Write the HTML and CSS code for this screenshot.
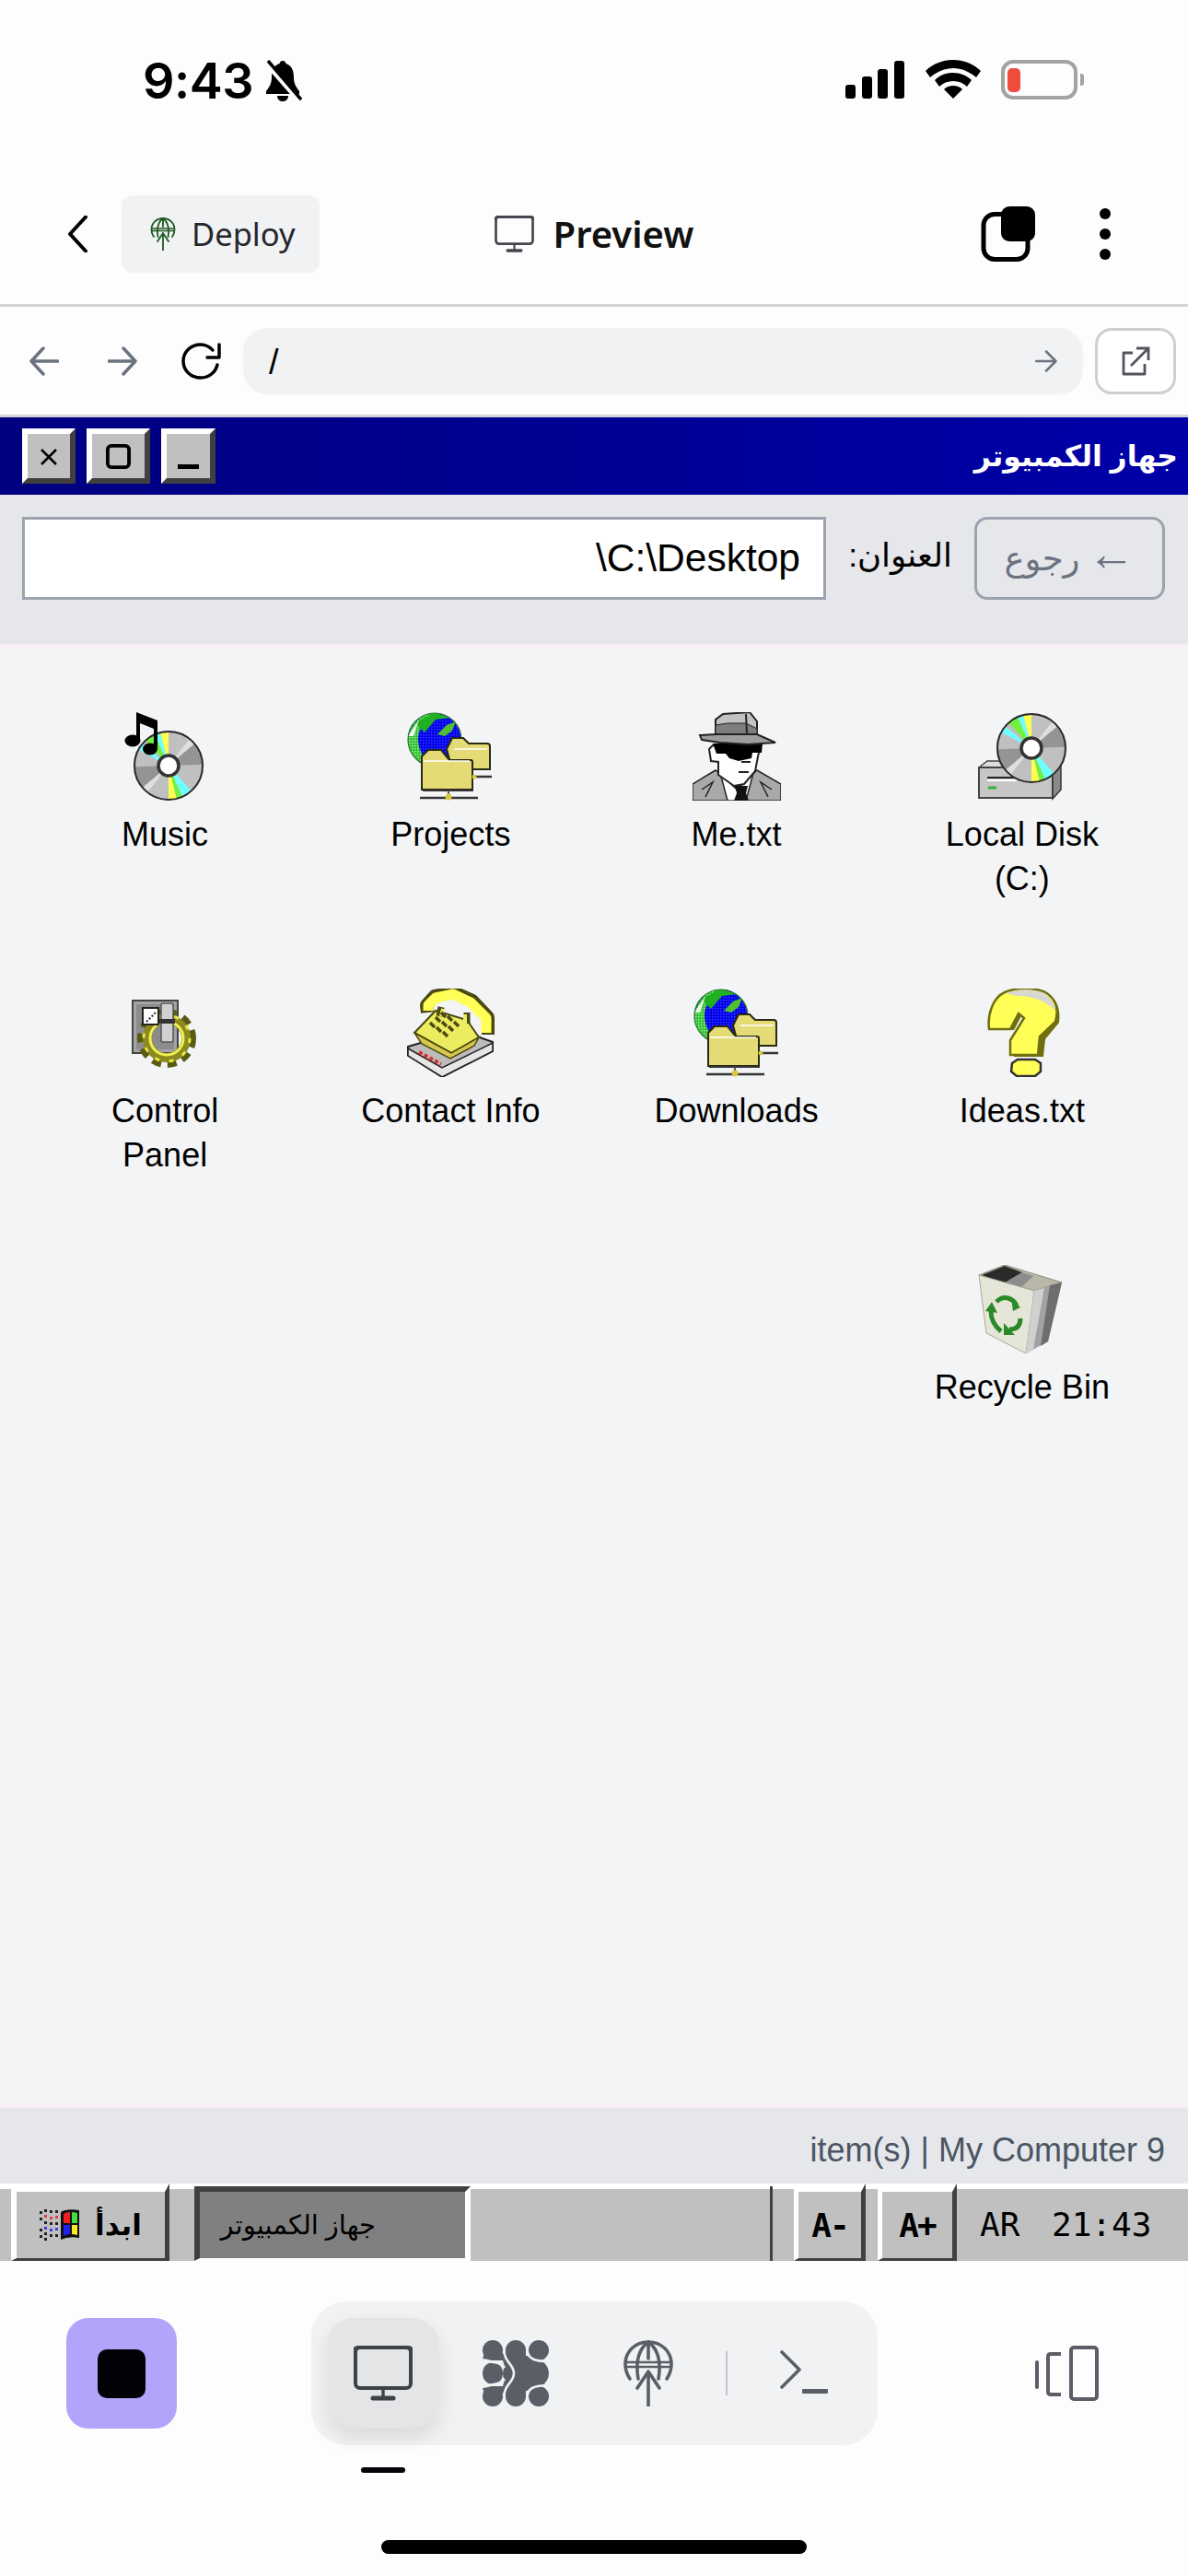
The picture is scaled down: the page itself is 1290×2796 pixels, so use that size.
FILE: index.html
```html
<!DOCTYPE html>
<html lang="en">
<head>
<meta charset="utf-8">
<title>Preview</title>
<link rel="stylesheet" href="styles.css">
</head>
<body>
<svg class="defs" xmlns="http://www.w3.org/2000/svg">
  <defs>
    <pattern id="dFolder" width="2" height="2" patternUnits="userSpaceOnUse"><rect width="2" height="2" fill="#f0e68c"/><rect width="1" height="1" fill="#d8d060"/><rect x="1" y="1" width="1" height="1" fill="#d8d060"/></pattern>
    <pattern id="dGrey" width="3" height="3" patternUnits="userSpaceOnUse"><rect width="3" height="3" fill="#a8a8a8"/><rect width="1.5" height="1.5" fill="#808080"/><rect x="1.5" y="1.5" width="1.5" height="1.5" fill="#808080"/></pattern>
    <pattern id="dLight" width="3" height="3" patternUnits="userSpaceOnUse"><rect width="3" height="3" fill="#f4f4f4"/><rect width="1.5" height="1.5" fill="#c8c8c8"/><rect x="1.5" y="1.5" width="1.5" height="1.5" fill="#c8c8c8"/></pattern>
    <pattern id="dOcean" width="3" height="3" patternUnits="userSpaceOnUse"><rect width="3" height="3" fill="#0000e8"/><rect width="1.5" height="1.5" fill="#3a3aff"/></pattern>
    <pattern id="dLand" width="3" height="3" patternUnits="userSpaceOnUse"><rect width="3" height="3" fill="#30c030"/><rect width="1.5" height="1.5" fill="#a0f0a0"/></pattern>
    <clipPath id="cdClip"><circle cx="39" cy="39" r="37"/></clipPath>
    <clipPath id="globeClip"><circle cx="31" cy="30" r="29"/></clipPath>
    <symbol id="cd" viewBox="0 0 78 78">
      <circle cx="39" cy="39" r="38" fill="#c0c0c0"/>
      <g clip-path="url(#cdClip)">
        <polygon points="39,39 24.5,-19.2 39,-21" fill="#ffff50"/>
        <polygon points="39,39 14.6,-15.8 24.5,-19.2" fill="#70ffff"/>
        <polygon points="39,39 -1.1,-5.6 14.6,-15.8" fill="#70f040"/>
        <polygon points="39,39 -14,10.9 -7,.4" fill="#70ffff"/>
        <polygon points="39,39 39,99 53.5,97.2" fill="#ffff50"/>
        <polygon points="39,39 53.5,97.2 63.4,93.8" fill="#70f040"/>
        <polygon points="39,39 63.4,93.8 79.1,83.6" fill="#70ffff"/>
        <polygon points="39,39 76,-8.3 85,.4" fill="url(#dLight)"/>
        <polygon points="39,39 2,86.3 -7,77.6" fill="url(#dLight)"/>
        <polygon points="39,39 85,.4 99,37" fill="url(#dGrey)"/>
        <polygon points="39,39 -7,77.6 -21,41" fill="url(#dGrey)"/>
      </g>
      <circle cx="39" cy="39" r="37" fill="none" stroke="#2a2a2a" stroke-width="2"/>
      <circle cx="39" cy="39" r="11" fill="#fff" stroke="#333" stroke-width="3.5"/>
    </symbol>
    <symbol id="globefolders" viewBox="0 0 96 96">
      <circle cx="31" cy="30" r="29" fill="url(#dOcean)"/>
      <g clip-path="url(#globeClip)">
        <path d="M2 30C4 12 18 0 34 0 26 4 18 10 14 22 10 34 18 50 26 58 14 58 0 46 2 30Z" fill="url(#dLand)"/>
        <path d="M10 12 30 0 48 6 32 8 20 22Z" fill="#20b020"/>
        <path d="M34 24 44 14 54 10 50 20 42 26Z" fill="#50c030"/>
        <path d="M2 26 14 8 8 26Z" fill="#f0f8f0"/>
      </g>
      <circle cx="31" cy="30" r="29" fill="none" stroke="#2c7a2c" stroke-width="1.2"/>
      <path d="M72 70H93" stroke="#333" stroke-width="2.5"/>
      <path d="M44 40 50 28H62L68 34H88Q91 34 91 37V62H50Z" fill="url(#dFolder)" stroke="#2a2a10" stroke-width="2"/>
      <path d="M52 40H88" stroke="#fff" stroke-width="1.5"/>
      <path d="M17 84V48L24 41H38L47 52H70Q72 52 72 54V84Z" fill="url(#dFolder)" stroke="#2a2a10" stroke-width="2"/>
      <path d="M19 53H69" stroke="#fff" stroke-width="1.5"/>
      <path d="M18 85H73" stroke="#333" stroke-width="2"/>
      <path d="M15 93H78" stroke="#333" stroke-width="2.5"/>
      <path d="M46 85V90" stroke="#555" stroke-width="2"/>
      <circle cx="46" cy="92" r="3.5" fill="#d8c840"/>
      <circle cx="74" cy="70" r="2.5" fill="#d8c840"/>
    </symbol>
    <symbol id="deployglyph" viewBox="0 0 54 72">
      <g fill="none" stroke="currentColor" stroke-width="3.6" stroke-linecap="round" stroke-linejoin="round">
        <path d="M7 42C3 36 2 30 2 26 2 12 13 2 27 2S52 12 52 26C52 30 51 36 47 42"/>
        <path d="M27 2C16 10 13 24 16 42M27 2C38 10 41 24 38 42M27 2V20"/>
        <path d="M2 24H52M2 29H52" stroke-width="2.6"/>
        <path d="M27 71V34M15 52 27 34 39 52"/>
      </g>
    </symbol>
    <symbol id="monitorglyph" viewBox="0 0 64 60">
      <g fill="none" stroke="currentColor" stroke-linecap="round">
        <rect x="2" y="2" width="60" height="44" rx="5" stroke-width="4"/>
        <path d="M1 6Q1 2 5 2H59Q63 2 63 6" stroke-width="4"/>
        <path d="M32 47V56" stroke-width="3.4"/>
        <path d="M21 57H43" stroke-width="5"/>
      </g>
    </symbol>
  </defs>
</svg>

<div class="phone">
  <header class="status">
    <div class="status-left">
      <span class="clock">9:43</span>
      <svg class="bell" viewBox="0 0 42 46"><path d="M21 1c2 0 3 1 3.500 3C31 6 33 12 33 19c0 7 3 11 6 15v3H3v-3c3-4 6-8 6-15C9 12 11 6 17.500 4 18 2 19 1 21 1Z" fill="#000"/><path d="M15 39h12c0 4-3 6-6 6s-6-2-6-6Z" fill="#000"/><path d="M3 3 39 44" stroke="#fdfdfd" stroke-width="6"/><path d="M5 1 41 43" stroke="#000" stroke-width="3.500"/></svg>
    </div>
    <div class="status-right">
      <svg class="signal" viewBox="0 0 64 41"><rect x="0" y="26" width="11" height="15" rx="3"/><rect x="18" y="17" width="11" height="24" rx="3"/><rect x="35" y="9" width="11" height="32" rx="3"/><rect x="53" y="0" width="11" height="41" rx="3"/></svg>
      <svg class="wifi" viewBox="0 0 60 42"><path d="M30 0C19 0 8 4 0 12l5 7c7-6 16-10 25-10s18 4 25 10l5-7C52 4 41 0 30 0Z"/><path d="M30 14c-8 0-15 3-20 8l5 7c4-4 9-6 15-6s11 2 15 6l5-7c-5-5-12-8-20-8Z"/><path d="M30 28c-4 0-7 1-10 4l10 10 10-10c-3-3-6-4-10-4Z"/></svg>
      <div class="battery"><span class="battery-level"></span></div>
      <span class="battery-nub"></span>
    </div>
  </header>

  <nav class="appbar">
    <div class="appbar-left">
      <svg class="chevron" viewBox="0 0 22 40"><path d="M20 1.500 3 20l17 18.500" fill="none" stroke="#000" stroke-width="4" stroke-linecap="round" stroke-linejoin="round"/></svg>
      <div class="chip">
        <svg class="chip-icon"><use href="#deployglyph"/></svg>
        <span>Deploy</span>
      </div>
    </div>
    <div class="appbar-title">
      <svg class="title-icon"><use href="#monitorglyph"/></svg>
      <span>Preview</span>
    </div>
    <div class="appbar-right">
      <svg class="tabs-icon" viewBox="0 0 60 60"><rect x="3" y="8.500" width="48" height="49" rx="12" fill="none" stroke="#000" stroke-width="5"/><rect x="22" y="0" width="37" height="38" rx="9" fill="#000"/></svg>
      <svg class="dots" viewBox="0 0 14 58"><circle cx="7" cy="7" r="6"/><circle cx="7" cy="29" r="6"/><circle cx="7" cy="51" r="6"/></svg>
    </div>
  </nav>

  <div class="browserbar">
    <svg class="nav-arrow" viewBox="0 0 32 32"><path d="M31 16H3M15 2 2 16l13 14" fill="none" stroke="#6b7280" stroke-width="3.500" stroke-linecap="round" stroke-linejoin="round"/></svg>
    <svg class="nav-arrow nav-forward" viewBox="0 0 32 32"><path d="M1 16h28M17 2l13 14-13 14" fill="none" stroke="#6b7280" stroke-width="3.500" stroke-linecap="round" stroke-linejoin="round"/></svg>
    <svg class="reload" viewBox="0 0 44 40"><path d="M34 8C30 4 26 2 21 2 10 2 2 10 2 20s8 18 19 18c9 0 16-6 18-14" fill="none" stroke="#000" stroke-width="3.500" stroke-linecap="round"/><path d="M41 2v14H28" fill="none" stroke="#000" stroke-width="3.500" stroke-linecap="round" stroke-linejoin="round"/></svg>
    <div class="urlbar">
      <span class="url-text">/</span>
      <svg class="url-go" viewBox="0 0 24 24"><path d="M1 12h20M12 1.500 22.500 12 12 22.500" fill="none" stroke="#6b7280" stroke-width="2.500" stroke-linecap="round" stroke-linejoin="round"/></svg>
    </div>
    <button class="ext-btn" type="button"><svg viewBox="0 0 32 32"><path d="M13 7H3v23h23V19" fill="none" stroke="#52555c" stroke-width="2.800" stroke-linejoin="round"/><path d="M11 21 30 2M17 2h13v13" fill="none" stroke="#52555c" stroke-width="2.800"/></svg></button>
  </div>

  <main class="window" dir="rtl">
    <div class="titlebar">
      <span class="title-text">جهاز الكمبيوتر</span>
      <div class="win-buttons">
        <button class="bevel win-btn win-min" type="button"><svg viewBox="0 0 23 5"><rect width="23" height="5" fill="#000"/></svg></button>
        <button class="bevel win-btn win-max" type="button"><svg viewBox="0 0 28 28"><rect x="2" y="2" width="24" height="24" rx="4" fill="none" stroke="#000" stroke-width="4"/></svg></button>
        <button class="bevel win-btn win-close" type="button"><svg viewBox="0 0 18 18"><path d="M1 1l16 16M17 1 1 17" stroke="#000" stroke-width="2.500"/></svg></button>
      </div>
    </div>

    <div class="toolbar">
      <button class="back-btn" type="button"><span class="back-arrow">←</span> رجوع</button>
      <span class="addr-label">العنوان:</span>
      <div class="addr-input">C:\Desktop\</div>
    </div>

    <section class="desktop">
      <div class="item">
        <svg class="ico" viewBox="0 0 96 96">
          <path d="M1 60 10 53H40V60Z" fill="#dcdcdc" stroke="#444" stroke-width="1.500"/>
          <path d="M1 60H81V93H1Z" fill="#c6c6c6" stroke="#444" stroke-width="2"/>
          <path d="M81 62 90 50V84L81 94Z" fill="#8a8a8a" stroke="#333" stroke-width="1.500"/>
          <path d="M10 71H42" stroke="#222" stroke-width="2"/>
          <path d="M10 74H42" stroke="#fff" stroke-width="2"/>
          <path d="M11 82H20" stroke="#30b030" stroke-width="3"/>
          <use href="#cd" x="19" y="0" width="78" height="78"/>
        </svg>
        <span class="ico-label">Local Disk (C:)</span>
      </div>
      <div class="item">
        <svg class="ico" viewBox="0 0 96 96">
          <path d="M0 96V78L25 63 34 70 48 82 62 70 70 63 96 78V96Z" fill="#a9a9a9" stroke="#222" stroke-width="1.500"/>
          <path d="M10 84 22 76 14 92M86 84 74 76 82 92" fill="none" stroke="#222" stroke-width="1.500"/>
          <path d="M30 66 48 84 66 66 58 96H38Z" fill="#fff" stroke="#222" stroke-width="1.500"/>
          <path d="M18 40 20 53 28 54 28 68 45 80 56 78 68 64 71 48 74 36H22Z" fill="#fff" stroke="#222" stroke-width="2"/>
          <path d="M46 80H60L58 88 61 96H45L48 88Z" fill="#111"/>
          <path d="M22 34H76L75 44H65L64 50 50 53 40 50 36 45H26Z" fill="#000"/>
          <path d="M53 54H63M50 65H61" stroke="#222" stroke-width="2"/>
          <path d="M25 24V8L33 2 62 0 70 10V26Z" fill="#c2c2c2" stroke="#222" stroke-width="2"/>
          <path d="M25 14 38 12H58L70 18V26H25Z" fill="#7e7e7e" stroke="#222" stroke-width="1"/>
          <path d="M58 2 59 25" stroke="#222" stroke-width="2"/>
          <path d="M8 25 26 24H70L90 33 60 35 30 33 10 30Z" fill="#9e9e9e" stroke="#222" stroke-width="2"/>
        </svg>
        <span class="ico-label">Me.txt</span>
      </div>
      <div class="item">
        <svg class="ico" viewBox="0 0 96 96"><use href="#globefolders"/></svg>
        <span class="ico-label">Projects</span>
      </div>
      <div class="item">
        <svg class="ico" viewBox="0 0 96 96">
          <use href="#cd" x="13" y="19" width="78" height="78"/>
          <path d="M17 0 40 9V40H36V18L21 12V30H17Z" fill="#000"/>
          <ellipse cx="13" cy="31" rx="8.500" ry="6.500" fill="#000"/>
          <ellipse cx="32" cy="40" rx="8" ry="6.500" fill="#000"/>
        </svg>
        <span class="ico-label">Music</span>
      </div>

      <div class="item">
        <svg class="ico" viewBox="0 0 96 96">
          <path d="M14 44C12 30 18 10 29 4 36 1 44 0 50 0 60 0 70 1 76 6 84 12 88 22 86 36L71 54 69 73H37L37 56 52 32 46 27 37 44Z" fill="#6f6f10" transform="translate(2 1)"/>
          <path d="M12 44C10 28 16 10 29 4 36 1 44 0 50 0 60 0 70 1 76 6 84 12 88 22 84 36L67 52 65 72H35L35 56 50 32 44 27 35 44Z" fill="#ffff58" stroke="#6f6f10" stroke-width="2.500"/>
          <path d="M30 5C44 0 62 0 74 6 80 12 84 18 84 24 74 14 60 8 42 8Z" fill="#d8d8d0"/>
          <path d="M37 81 43 77H62L68 81V90L62 95H42L36 90Z" fill="#ffff58" stroke="#333" stroke-width="2.500"/>
        </svg>
        <span class="ico-label">Ideas.txt</span>
      </div>
      <div class="item">
        <svg class="ico" viewBox="0 0 96 96"><use href="#globefolders"/></svg>
        <span class="ico-label">Downloads</span>
      </div>
      <div class="item">
        <svg class="ico" viewBox="0 0 96 96">
          <path d="M2 63 60 46 94 58 94 68 39 96 2 72Z" fill="#bcbcbc" stroke="#222" stroke-width="2"/>
          <path d="M2 65 39 86 94 59 94 68 39 96 2 73Z" fill="#e6e6e6" stroke="#222" stroke-width="1.500"/>
          <path d="M14 69 38 82" stroke="#d83030" stroke-width="4" stroke-dasharray="4 2.500"/>
          <path d="M9 48 32 24 66 34 79 53 49 70Z" fill="#ecec60" stroke="#4a4a10" stroke-width="2"/>
          <path d="M9 48 49 70 79 53 74 62 48 76 17 60Z" fill="#d8c850" stroke="#4a4a10" stroke-width="1.500"/>
          <path d="M38 20 36 30M66 26 66 38" stroke="#4a4a10" stroke-width="7"/>
          <path d="M40 22 38 30M64 28 64 38" stroke="#ecec60" stroke-width="4"/>
          <path d="M23 26 22 18 31 8 52 4 72 13 89 31 89 50" fill="none" stroke="#4a4a10" stroke-width="14" stroke-linejoin="round"/>
          <path d="M24 24 24 18 32 10 51 6 70 15 87 32 87 48" fill="none" stroke="#ffff58" stroke-width="11" stroke-linejoin="round"/>
          <path d="M26 37 31 42M32 31 37 36M38 26 43 31M33 42 38 47M39 36 44 41M45 30 50 35M40 47 45 52M46 41 51 46M52 36 57 41" stroke="#4a4a10" stroke-width="3.500"/>
        </svg>
        <span class="ico-label">Contact Info</span>
      </div>
      <div class="item">
        <svg class="ico" viewBox="0 0 96 96">
          <rect x="13" y="13" width="49" height="57" fill="#a4a4a4" stroke="#444" stroke-width="2"/>
          <rect x="17" y="17" width="41" height="49" fill="#8c8c8c"/>
          <circle cx="50" cy="54" r="26" fill="none" stroke="#5a5a12" stroke-width="12" stroke-dasharray="9 6.400"/>
          <circle cx="50" cy="54" r="21" fill="none" stroke="#8a8a20" stroke-width="10"/>
          <circle cx="50" cy="54" r="18" fill="none" stroke="#f0f050" stroke-width="3"/>
          <circle cx="50" cy="54" r="25" fill="none" stroke="#e8e840" stroke-width="3" stroke-dasharray="5 10.700"/>
          <rect x="24" y="21" width="17" height="18" fill="#fff" stroke="#222" stroke-width="2"/>
          <path d="M28 36 38 26" stroke="#222" stroke-width="2" stroke-dasharray="2 2"/>
          <rect x="44" y="16" width="13" height="42" rx="2" fill="#d0d0d0" stroke="#555" stroke-width="1.500"/>
          <rect x="42" y="33" width="17" height="5" fill="#333"/>
        </svg>
        <span class="ico-label">Control Panel</span>
      </div>

      <div class="item">
        <svg class="ico" viewBox="0 0 96 96">
          <path d="M1 11 29 0 91 19 61 28Z" fill="#b9b8a8" stroke="#8a8a7a" stroke-width="1"/>
          <path d="M4 11 29 1 48 8 28 20Z" fill="#2a2a2a"/>
          <path d="M28 20 48 8 60 12 47 24Z" fill="#8c8c8c"/>
          <path d="M1 11 61 28 52 96 9 74Z" fill="#e6e6d8" stroke="#a8a898" stroke-width="1"/>
          <path d="M61 28 91 19 76 83 52 96Z" fill="#a2a2a2"/>
          <path d="M61 28 72 25 60 91 52 96Z" fill="#d0d0d0"/>
          <path d="M78 22 91 19 76 83 68 88Z" fill="#6e6e6e"/>
          <g fill="none" stroke="#2a8a2a" stroke-width="5">
            <path d="M14 50C14 62 20 68 25 72"/>
            <path d="M20 40C28 32 38 36 42 44"/>
            <path d="M46 58C46 66 42 70 34 70"/>
          </g>
          <path d="M8 50 15 40 21 52ZM36 36 46 46 38 50ZM28 63 40 76 28 76Z" fill="#2a8a2a"/>
        </svg>
        <span class="ico-label">Recycle Bin</span>
      </div>
    </section>

    <div class="statusline">9 item(s) | My Computer</div>

    <div class="taskbar" dir="ltr">
      <button class="bevel start" type="button">
        <svg class="flag" viewBox="0 0 46 36">
          <g fill="#222"><rect x="1" y="3" width="3" height="3"/><rect x="1" y="10" width="3" height="3"/><rect x="1" y="22" width="3" height="3"/><rect x="1" y="29" width="3" height="3"/><rect x="6" y="1" width="3" height="3"/><rect x="6" y="14" width="3" height="3"/><rect x="6" y="26" width="3" height="3"/><rect x="6" y="32" width="3" height="3"/></g>
          <g fill="#e04040"><rect x="6" y="7" width="3" height="3"/><rect x="12" y="9" width="3" height="3"/><rect x="18" y="8" width="3" height="3"/></g>
          <g fill="#4040e0"><rect x="6" y="20" width="3" height="3"/><rect x="12" y="22" width="3" height="3"/><rect x="18" y="21" width="3" height="3"/></g>
          <g fill="#222"><rect x="12" y="2" width="3" height="3"/><rect x="18" y="2" width="3" height="3"/><rect x="12" y="15" width="3" height="3"/><rect x="18" y="15" width="3" height="3"/><rect x="12" y="28" width="3" height="3"/><rect x="18" y="28" width="3" height="3"/></g>
          <path d="M24 4 Q30 0 44 2 V32 Q32 30 24 34Z" fill="#111"/>
          <path d="M27 6 Q30 4 34 4 V16 H27Z" fill="#f02020"/>
          <path d="M36 4 Q38 4 42 5 V16 H36Z" fill="#40e040"/>
          <path d="M27 18 H34 V28 Q30 28 27 30Z" fill="#2020f0"/>
          <path d="M36 18 H42 V29 Q38 28 36 28Z" fill="#ffe820"/>
        </svg>
        <span class="start-text">ابدأ</span>
      </button>
      <div class="task-active" dir="rtl"><span>جهاز الكمبيوتر</span></div>
      <span class="task-divider"></span>
      <button class="bevel font-btn" type="button">A-</button>
      <button class="bevel font-btn font-plus" type="button">A+</button>
      <span class="tray">AR 21:43</span>
    </div>
  </main>

  <footer class="bottom">
    <div class="bottom-row">
      <button class="stop" type="button"><span class="stop-square"></span></button>
      <div class="tabs">
        <div class="tab tab-active"><svg class="tab-monitor"><use href="#monitorglyph"/></svg></div>
        <div class="tab">
          <svg class="tab-mesh" viewBox="0 0 72 72">
            <g fill="#5b5e66">
              <ellipse cx="11" cy="11" rx="11" ry="11"/><ellipse cx="36" cy="11" rx="11" ry="11"/><ellipse cx="61" cy="11" rx="11" ry="11"/>
              <ellipse cx="11" cy="36" rx="11" ry="12"/>
              <ellipse cx="11" cy="61" rx="11" ry="11"/><ellipse cx="36" cy="61" rx="11" ry="11"/><ellipse cx="61" cy="61" rx="11" ry="11"/>
              <ellipse cx="47" cy="36" rx="25" ry="19"/>
              <rect x="25" y="11" width="22" height="20"/>
              <rect x="25" y="41" width="22" height="20"/>
              <path d="M2 14H22L34 30V42L22 58H2L0 52 14 50H22L26 36 22 22H14L0 20Z"/>
            </g>
            <g fill="none" stroke="#f1f2f4" stroke-width="2.600">
              <path d="M23.500 0V12C23.500 24 34 26 34 36S23.500 48 23.500 60V72"/>
              <path d="M48.500 0V10C48.500 20 56 23 72 23"/>
              <path d="M48.500 72V62C48.500 52 56 49 72 49"/>
              <path d="M0 23C10 23 20 24 24 30M0 49C10 49 20 48 24 42"/>
            </g>
          </svg>
        </div>
        <div class="tab"><svg class="tab-deploy"><use href="#deployglyph"/></svg></div>
        <span class="tab-sep"></span>
        <div class="tab">
          <svg class="tab-term" viewBox="0 0 56 50"><path d="M3 2 22 21 3 40" fill="none" stroke="#5b5e66" stroke-width="3.600" stroke-linecap="round" stroke-linejoin="round"/><rect x="25" y="42" width="28" height="5" rx="1" fill="#5b5e66"/></svg>
        </div>
      </div>
      <svg class="device" viewBox="0 0 70 60"><path d="M3 18V45" stroke="#5b5e66" stroke-width="4" stroke-linecap="round"/><path d="M29 9H18Q15 9 15 12V50Q15 53 18 53H29" fill="none" stroke="#5b5e66" stroke-width="4"/><rect x="40" y="2" width="28" height="56" rx="3" fill="none" stroke="#5b5e66" stroke-width="4"/></svg>
    </div>
    <span class="indicator"></span>
    <span class="home"></span>
  </footer>
</div>
</body>
</html>
```

FILE: styles.css
```css
* { box-sizing: border-box; }
html, body { margin: 0; padding: 0; }
body { background: #fdfdfd; font-family: "Liberation Sans", "DejaVu Sans", sans-serif; color: #000; }
button { font: inherit; color: inherit; padding: 0; margin: 0; cursor: default; }
.defs { display: block; width: 0; height: 0; }

.phone { width: 1290px; height: 2796px; display: flex; flex-direction: column; overflow: hidden; }

/* Status bar */
.status { height: 160px; flex: none; display: flex; justify-content: space-between; align-items: flex-start; padding: 65px 113px 0 155px; }
.status-left { display: flex; align-items: flex-start; gap: 11px; }
.clock { font-family: Inter, sans-serif; font-weight: 600; font-size: 54px; line-height: 46px; letter-spacing: -.5px; height: 46px; }
.bell { width: 42px; height: 46px; }
.status-right { display: flex; align-items: flex-start; }
.signal { width: 64px; height: 41px; margin-top: 1px; }
.wifi { width: 60px; height: 42px; margin-left: 23px; }
.battery { width: 83px; height: 43px; margin-left: 22px; border: 4px solid #a3a3a3; border-radius: 13px; padding: 5px 0 0 3px; }
.battery-level { display: block; width: 14px; height: 26px; background: #ee4c3c; border-radius: 5px; }
.battery-nub { width: 4px; height: 13px; margin: 15px 0 0 3px; background: #a3a3a3; border-radius: 0 3px 3px 0; }

/* App bar */
.appbar { height: 173px; flex: none; display: grid; grid-template-columns: 1fr auto 1fr; align-items: center; border-bottom: 3px solid #d4d4d8; padding-top: 17px; }
.appbar-left { display: flex; align-items: center; padding-left: 73px; }
.chevron { width: 22px; height: 40px; }
.chip { margin-left: 37px; width: 215px; height: 84px; background: #f1f2f4; border-radius: 12px; display: flex; align-items: center; padding-left: 31px; gap: 17px; font-family: "Noto Sans", sans-serif; font-size: 34.500px; color: #26272b; }
.chip-icon { width: 28px; height: 36px; color: #1f5a1f; }
.appbar-title { display: flex; align-items: center; gap: 21px; font-family: "Noto Sans", sans-serif; font-weight: 600; font-size: 40px; color: #111; }
.title-icon { width: 43px; height: 40px; color: #44464d; }
.appbar-right { display: flex; justify-content: flex-end; align-items: center; padding-right: 83px; gap: 68px; }
.tabs-icon { width: 60px; height: 60px; }
.dots { width: 14px; height: 58px; }

/* Browser bar */
.browserbar { height: 120px; flex: none; display: flex; align-items: center; padding: 0 13px 0 32px; border-bottom: 3px solid #d4d4d8; }
.nav-arrow { width: 32px; height: 32px; flex: none; }
.nav-forward { margin-left: 53px; }
.reload { width: 44px; height: 40px; flex: none; margin-left: 48px; }
.urlbar { margin-left: 23px; width: 912px; height: 72px; background: #f1f2f4; border-radius: 26px; display: flex; align-items: center; justify-content: space-between; padding: 0 28px; }
.url-text { font-size: 38px; padding-top: 3px; }
.url-go { width: 24px; height: 24px; }
.ext-btn { margin-left: 13px; width: 88px; height: 72px; border: 3px solid #cfcfcf; border-radius: 18px; background: #fff; display: flex; align-items: center; justify-content: center; }
.ext-btn svg { width: 32px; height: 32px; }

/* Window */
.window { height: 2001px; flex: none; display: flex; flex-direction: column; background: #f3f4f6; }
.titlebar { height: 84px; flex: none; display: flex; justify-content: space-between; align-items: center; padding: 0 11px 0 24px; background: linear-gradient(to right, #000080, #0000a8); }
.title-text { color: #fff; font-size: 31.500px; font-weight: 700; }
.win-buttons { display: flex; gap: 12px; }
.bevel { border-style: solid; border-color: #fff #404040 #404040 #fff; background: #c0c0c0; }
.win-btn { border-width: 6px; height: 60px; display: flex; align-items: center; justify-content: center; }
.win-close { width: 58px; }
.win-close svg { width: 18px; height: 18px; margin-top: 2px; }
.win-max { width: 69px; }
.win-max svg { width: 27px; height: 27px; }
.win-min { width: 59px; }
.win-min svg { width: 23px; height: 5px; margin-top: 22px; }

.toolbar { height: 165px; flex: none; display: flex; align-items: flex-start; padding: 24px 25px 0 24px; background: #e5e7eb; border-bottom: 3px solid #f9edf9; }
.back-btn { width: 207px; height: 90px; flex: none; border: 3px solid #9ca3af; border-radius: 14px; background: transparent; color: #6b7280; font-size: 37px; display: flex; align-items: center; justify-content: center; gap: 8px; }
.back-arrow { font-size: 52px; line-height: 40px; margin-top: -10px; }
.addr-label { flex: none; width: 161px; height: 90px; line-height: 84px; text-align: center; font-size: 35.500px; }
.addr-input { flex: 1; height: 90px; background: #fff; border: 3px solid #9ca3af; font-size: 42.500px; line-height: 84px; padding: 0 25px; }

.desktop { flex: 1; padding: 71px 25px 0 24px; display: grid; grid-template-columns: repeat(4, 1fr); grid-auto-rows: 300px; align-content: start; }
.item { display: flex; flex-direction: column; align-items: center; direction: ltr; }
.ico { width: 96px; height: 96px; flex: none; display: block; filter: blur(.4px); }
.ico-label { margin-top: 13px; max-width: 197px; font-size: 36px; line-height: 48px; text-align: center; }

.statusline { height: 85px; flex: none; border-top: 3px solid #f9edf9; background: #e5e7eb; color: #4b5563; font-size: 36px; line-height: 80px; padding: 6px 25px 0; }

.taskbar { height: 84px; flex: none; display: flex; align-items: flex-start; background: #c0c0c0; border-top: 6px solid #fff; }
.start { margin: -6px 0 0 12px; width: 172px; height: 84px; border-width: 9px 5px 3px 6px; display: flex; align-items: center; padding: 0 0 0 24px; gap: 15px; }
.flag { width: 46px; height: 36px; flex: none; }
.start-text { font-size: 31px; font-weight: 700; }
.task-active { margin: -3px 0 0 27px; width: 300px; height: 81px; background: #808080; border-style: solid; border-width: 6px; border-color: #404040 #fff #fff #404040; border-bottom-width: 3px; display: flex; align-items: center; justify-content: flex-start; padding-right: 97px; font-size: 29px; color: #000; }
.task-divider { margin: -3px 0 0 325px; width: 3px; height: 81px; background: #404040; flex: none; }
.font-btn { font-family: "DejaVu Sans Mono", monospace; font-weight: 700; font-size: 36px; margin: -6px 0 0 23px; width: 78px; height: 84px; border-width: 9px 5px 3px 5px; display: flex; align-items: center; justify-content: center; letter-spacing: -2px; }
.font-plus { margin-left: 13px; width: 86px; }
.tray { font-family: "DejaVu Sans Mono", monospace; font-size: 36px; line-height: 78px; word-spacing: 13px; margin-left: 25px; }

/* Bottom */
.bottom { flex: 1; display: flex; flex-direction: column; }
.bottom-row { margin-top: 44px; height: 156px; flex: none; display: flex; align-items: center; padding-left: 72px; }
.stop { width: 120px; height: 120px; flex: none; background: #b2a4fb; border: 0; border-radius: 24px; display: flex; align-items: center; justify-content: center; }
.stop-square { width: 52px; height: 53px; border-radius: 10px; background: #030307; }
.tabs { margin-left: 146px; width: 615px; height: 156px; background: #f1f2f4; border-radius: 38px; display: flex; align-items: center; gap: 24px; padding-left: 18px; }
.tab { width: 120px; height: 120px; flex: none; display: flex; align-items: center; justify-content: center; border-radius: 28px; color: #5b5e66; }
.tab-active { background: #e4e5e7; color: #3f4148; box-shadow: 0 10px 22px rgba(0, 0, 0, .10); }
.tab-monitor { width: 64px; height: 60px; }
.tab-mesh { width: 72px; height: 72px; }
.tab-deploy { width: 54px; height: 72px; }
.tab-sep { width: 2px; height: 48px; background: #c4c5c9; flex: none; }
.tab-term { width: 56px; height: 50px; }
.device { width: 70px; height: 60px; margin-left: 170px; }
.indicator { display: block; width: 48px; height: 6px; margin: 24px 0 0 392px; background: #030307; border-radius: 3px; }
.home { display: block; width: 462px; height: 15px; margin: 73px 0 0 414px; background: #000; border-radius: 8px; }
```
